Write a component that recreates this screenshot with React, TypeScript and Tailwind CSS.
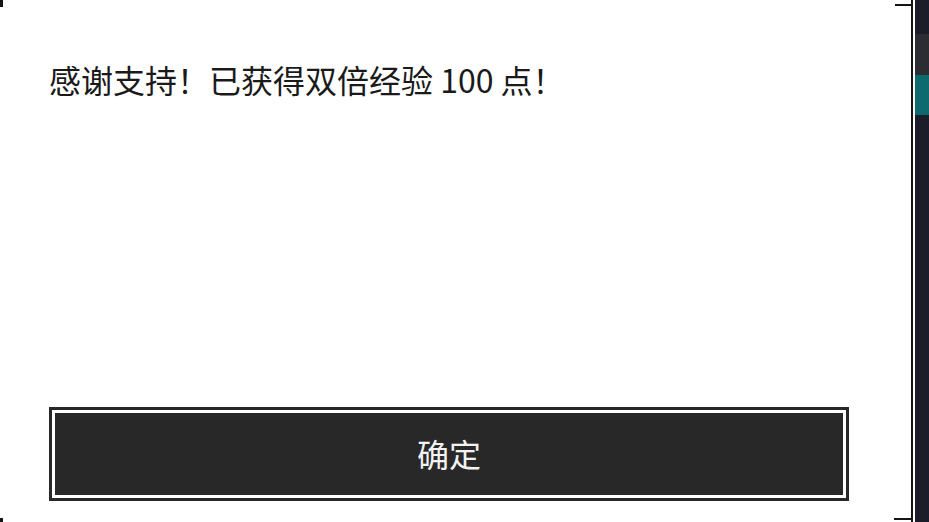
export default function App() {
  return (
    <div className="relative flex h-[522px] w-[929px] overflow-hidden bg-[#1b1e28] font-['Noto_Sans_CJK_SC','Noto_Sans',sans-serif]">
      <div className="relative h-full w-[915px] shrink-0 bg-white pr-[2px]">
        <div className="flex h-full w-[913px] flex-col border-r-2 border-[#141414] pl-[49px] pt-[59px]">
          <p className="text-[32px] leading-[40px] text-[#1a1a1a]">
            感谢支持！已获得双倍经验 100 点！
          </p>
          <div className="mt-auto mb-[21px] w-[800px] border-[3px] border-[#282828]">
            <button className="flex h-[88px] w-full items-center justify-center border-[3px] border-white bg-[#282828] pb-[2px] text-[32px] text-[#f2f2f2]">
              确定
            </button>
          </div>
        </div>
        {/* corner brackets */}
        <span className="absolute right-[2px] top-[4px] h-[2px] w-[18px] bg-[#141414]" />
        <span className="absolute right-[2px] bottom-[2px] h-[2px] w-[19px] bg-[#141414]" />
        <span className="absolute left-0 top-0 h-[7px] w-[3px] bg-[#141414]" />
        <span className="absolute left-0 bottom-0 h-[4px] w-[3px] bg-[#141414]" />
      </div>
      <div className="flex flex-1 flex-col">
        <div className="h-[34px]" />
        <div className="h-[41px] bg-[#2b2d33]" />
        <div className="h-[40px] bg-[#0d6b70]" />
      </div>
    </div>
  );
}
